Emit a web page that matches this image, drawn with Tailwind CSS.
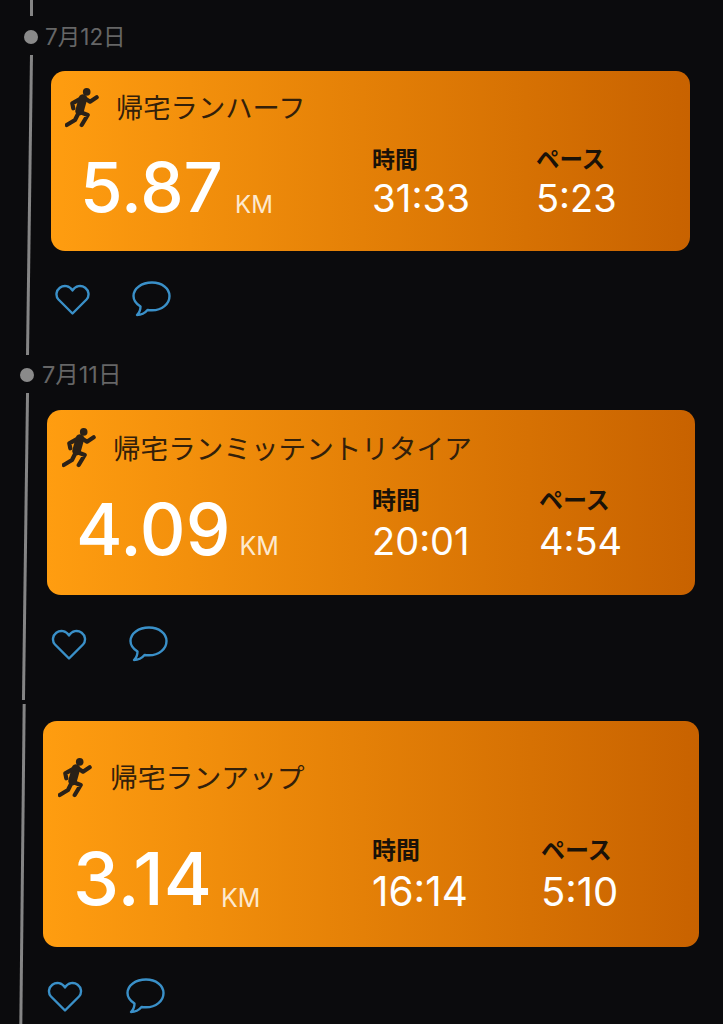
<!DOCTYPE html>
<html lang="ja">

<head>
  <title>Running log</title>
  <script src="https://cdn.jsdelivr.net/npm/@tailwindcss/browser@4"></script>
</head>

<body class="bg-[#0b0b0d] font-['Inter','Noto_Sans_CJK_JP',sans-serif]">
  <div class="relative w-[723px] h-[1024px] overflow-hidden flex flex-col">

    <!-- timeline rails -->
    <div class="absolute left-[30px] top-0 w-[3px] h-[16px] bg-[#858585]"></div>
    <div class="absolute left-[28px] top-[55px] w-[2.5px] h-[300px] bg-[#858585] rotate-[0.76deg]"></div>
    <div class="absolute left-[24px] top-[393px] w-[2.5px] h-[307px] bg-[#858585] rotate-[0.76deg]"></div>
    <div class="absolute left-[21px] top-[704px] w-[2.5px] h-[320px] bg-[#858585] rotate-[0.6deg]"></div>

    <!-- 7/12 -->
    <div class="mt-[23px] ml-[24px] h-[28px] flex items-center gap-[7px] text-[22.5px] text-[#666666]">
      <span class="w-[14px] h-[14px] rounded-full bg-[#8a8a8a]"></span>
      <span>7月12日</span>
    </div>

    <div class="mt-[20px] ml-[51px] w-[639px] h-[180px] rounded-[14px] bg-linear-to-r from-[#ff9d10] to-[#c86200] pl-[14px] pt-[17px]">
      <div class="flex items-center gap-[17px] h-[40px]">
        <svg class="w-[34px] h-[40px]" viewBox="0 0 34 40" fill="none" stroke="#2a2118" stroke-linecap="round" stroke-linejoin="round">
          <circle cx="21.7" cy="3.9" r="3.8" fill="#2a2118" stroke="none" />
          <path d="M18 10.5L14.5 23" stroke-width="8.5" />
          <path d="M18.3 9.3L25 13.7L31.7 9.3M18 9.3L7.3 15.3L8.3 20.3M14 24L10 32L1.7 37M14.3 23.7L22.7 27L16.7 37" stroke-width="4.2" />
        </svg>
        <span class="mt-[2px] text-[27.3px] font-normal text-[#33200a]">帰宅ランハーフ</span>
      </div>
      <div class="mt-[16px] grid grid-cols-[307px_164px_1fr]">
        <div class="mt-[5px] pl-[15px] flex items-end gap-[12px] h-[76px]">
          <span class="text-[69px] leading-[76px] font-medium text-white">5.87</span>
          <span class="text-[24px] leading-[40px] text-[#fde9cf]">KM</span>
        </div>
        <div class="text-[23px] leading-[32px] font-bold text-[#1a1208]">時間<div class="text-[38.5px] leading-[44px] font-normal text-white">31:33</div></div>
        <div class="text-[23.5px] leading-[32px] font-bold text-[#1a1208]">ペース<div class="text-[38px] leading-[44px] font-normal text-white">5:23</div></div>
      </div>
    </div>

    <div class="mt-[31px] ml-[55px] h-[34px] flex items-center gap-[42px]">
      <svg class="w-[35px] h-[31px]" viewBox="0 0 35 31" fill="none" stroke="#3a90c8" stroke-width="2.4" stroke-linejoin="round">
        <path d="M17.5 29.5L3.5 15.5C0.2 11.8 1.2 6.5 4.8 3.7C8.8 .8 14.5 1.5 17.5 6.5C20.5 1.5 26.2 .8 30.2 3.7C33.8 6.5 34.8 11.8 31.5 15.5Z" />
      </svg>
      <svg class="w-[39px] h-[36px]" viewBox="0 0 39 36" fill="none" stroke="#3a90c8" stroke-width="2.4" stroke-linejoin="round">
        <path d="M20 1.5C9.5 1.5 1.5 7.5 1.5 15C1.5 19.5 4.5 23 8.5 25.5C8.5 29 7 32 5 34C9 34 13 32 15.5 29C17 29.2 18.5 29.3 20 29.3C30 29.3 37.5 23 37.5 15C37.5 7.5 30 1.5 20 1.5Z" />
      </svg>
    </div>

    <!-- 7/11 -->
    <div class="mt-[45px] ml-[20px] h-[28px] flex items-center gap-[8px] text-[23.5px] text-[#666666]">
      <span class="w-[14px] h-[14px] rounded-full bg-[#8a8a8a]"></span>
      <span>7月11日</span>
    </div>

    <div class="mt-[21px] ml-[47px] w-[648px] h-[185px] rounded-[14px] bg-linear-to-r from-[#ff9d10] to-[#c86200] pl-[15px] pt-[18px]">
      <div class="flex items-center gap-[17px] h-[40px]">
        <svg class="w-[34px] h-[40px]" viewBox="0 0 34 40" fill="none" stroke="#2a2118" stroke-linecap="round" stroke-linejoin="round">
          <circle cx="21.7" cy="3.9" r="3.8" fill="#2a2118" stroke="none" />
          <path d="M18 10.5L14.5 23" stroke-width="8.5" />
          <path d="M18.3 9.3L25 13.7L31.7 9.3M18 9.3L7.3 15.3L8.3 20.3M14 24L10 32L1.7 37M14.3 23.7L22.7 27L16.7 37" stroke-width="4.2" />
        </svg>
        <span class="mt-[3px] text-[27.6px] font-normal text-[#33200a]">帰宅ランミッテントリタイア</span>
      </div>
      <div class="mt-[17px] grid grid-cols-[310px_167px_1fr]">
        <div class="mt-[4px] pl-[14px] flex items-end gap-[9px] h-[80px]">
          <span class="text-[71px] leading-[80px] font-medium text-white">4.09</span>
          <span class="text-[25px] leading-[46px] text-[#fde9cf]">KM</span>
        </div>
        <div class="text-[24px] leading-[32px] font-bold text-[#1a1208]">時間<div class="text-[38px] leading-[48px] font-normal text-white">20:01</div></div>
        <div class="text-[24px] leading-[32px] font-bold text-[#1a1208]">ペース<div class="text-[38px] leading-[48px] font-normal text-white">4:54</div></div>
      </div>
    </div>

    <div class="mt-[32px] ml-[51px] h-[34px] flex items-center gap-[42px]">
      <svg class="w-[36px] h-[31px]" viewBox="0 0 35 31" fill="none" stroke="#3a90c8" stroke-width="2.4" stroke-linejoin="round">
        <path d="M17.5 29.5L3.5 15.5C0.2 11.8 1.2 6.5 4.8 3.7C8.8 .8 14.5 1.5 17.5 6.5C20.5 1.5 26.2 .8 30.2 3.7C33.8 6.5 34.8 11.8 31.5 15.5Z" />
      </svg>
      <svg class="w-[39px] h-[36px]" viewBox="0 0 39 36" fill="none" stroke="#3a90c8" stroke-width="2.4" stroke-linejoin="round">
        <path d="M20 1.5C9.5 1.5 1.5 7.5 1.5 15C1.5 19.5 4.5 23 8.5 25.5C8.5 29 7 32 5 34C9 34 13 32 15.5 29C17 29.2 18.5 29.3 20 29.3C30 29.3 37.5 23 37.5 15C37.5 7.5 30 1.5 20 1.5Z" />
      </svg>
    </div>

    <!-- third run -->
    <div class="mt-[60px] ml-[43px] w-[656px] h-[226px] rounded-[14px] bg-linear-to-r from-[#ff9d10] to-[#c86200] pl-[15px] pt-[37px]">
      <div class="flex items-center gap-[18px] h-[40px]">
        <svg class="w-[34px] h-[40px]" viewBox="0 0 34 40" fill="none" stroke="#2a2118" stroke-linecap="round" stroke-linejoin="round">
          <circle cx="21.7" cy="3.9" r="3.8" fill="#2a2118" stroke="none" />
          <path d="M18 10.5L14.5 23" stroke-width="8.5" />
          <path d="M18.3 9.3L25 13.7L31.7 9.3M18 9.3L7.3 15.3L8.3 20.3M14 24L10 32L1.7 37M14.3 23.7L22.7 27L16.7 37" stroke-width="4.2" />
        </svg>
        <span class="mt-[2px] text-[27.8px] font-normal text-[#33200a]">帰宅ランアップ</span>
      </div>
      <div class="mt-[37px] grid grid-cols-[314px_169px_1fr]">
        <div class="mt-[5px] pl-[15px] flex items-end gap-[9px] h-[78px]">
          <span class="text-[73.5px] leading-[78px] font-medium text-white">3.14</span>
          <span class="text-[25px] leading-[40px] text-[#fde9cf]">KM</span>
        </div>
        <div class="text-[24px] leading-[32px] font-bold text-[#1a1208]">時間<div class="text-[40.5px] leading-[50px] font-normal text-white">16:14</div></div>
        <div class="text-[24px] leading-[32px] font-bold text-[#1a1208]">ペース<div class="text-[40px] leading-[50px] font-normal text-white">5:10</div></div>
      </div>
    </div>

    <div class="mt-[31px] ml-[47px] h-[36px] flex items-center gap-[43px]">
      <svg class="w-[36px] h-[31px]" viewBox="0 0 35 31" fill="none" stroke="#3a90c8" stroke-width="2.4" stroke-linejoin="round">
        <path d="M17.5 29.5L3.5 15.5C0.2 11.8 1.2 6.5 4.8 3.7C8.8 .8 14.5 1.5 17.5 6.5C20.5 1.5 26.2 .8 30.2 3.7C33.8 6.5 34.8 11.8 31.5 15.5Z" />
      </svg>
      <svg class="w-[39px] h-[36px]" viewBox="0 0 39 36" fill="none" stroke="#3a90c8" stroke-width="2.4" stroke-linejoin="round">
        <path d="M20 1.5C9.5 1.5 1.5 7.5 1.5 15C1.5 19.5 4.5 23 8.5 25.5C8.5 29 7 32 5 34C9 34 13 32 15.5 29C17 29.2 18.5 29.3 20 29.3C30 29.3 37.5 23 37.5 15C37.5 7.5 30 1.5 20 1.5Z" />
      </svg>
    </div>
  </div>
</body>

</html>
